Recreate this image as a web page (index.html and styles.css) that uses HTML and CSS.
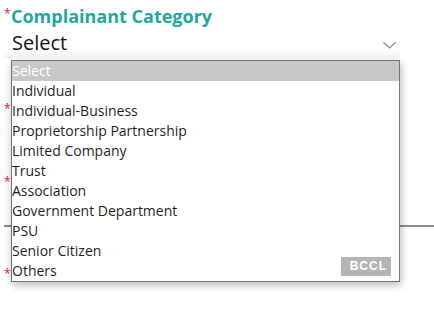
FILE: index.html
```html
<!DOCTYPE html>
<html lang="en">
<head>
    <meta charset="UTF-8">
    <meta name="viewport" content="width=device-width, initial-scale=1.0">
    <title>Complaint Form</title>
    <link rel="stylesheet" href="styles.css">
</head>
<body>
    <div class="form">
        <div class="field first">
            <label class="label"><span class="req">*</span>Complainant Category</label>
            <div class="select-box">
                <span class="select-value">Select</span>
                <svg class="chevron" width="13" height="7" viewBox="0 0 13 7">
                    <path d="M0.5 0.5 L6.5 6 L12.5 0.5" fill="none" stroke="#8a8a8a" stroke-width="1.2"/>
                </svg>
            </div>
        </div>

        <!-- fields below are covered by the open list -->
        <div class="field">
            <label class="label"><span class="req">*</span></label>
        </div>

        <div class="field tall">
            <label class="label"><span class="req">*</span></label>
            <div class="input-line"></div>
        </div>

        <div class="field last">
            <label class="label"><span class="req">*</span></label>
        </div>

        <ul class="dropdown">
            <li class="option active">Select</li>
            <li class="option">Individual</li>
            <li class="option">Individual-Business</li>
            <li class="option">Proprietorship Partnership</li>
            <li class="option">Limited Company</li>
            <li class="option">Trust</li>
            <li class="option">Association</li>
            <li class="option">Government Department</li>
            <li class="option">PSU</li>
            <li class="option">Senior Citizen</li>
            <li class="option">Others</li>
            <li class="watermark">BCCL</li>
        </ul>
    </div>
</body>
</html>
```

FILE: styles.css
```css
* {
    box-sizing: border-box;
    margin: 0;
    padding: 0;
}

body {
    font-family: 'Open Sans', 'Noto Sans', sans-serif;
    background: #ffffff;
    color: #1a1a1a;
}

.form {
    position: relative;
    padding: 4px 0 0 4px;
}

.field {
    display: flex;
    flex-direction: column;
    height: 73px;
}

.field.first {
    height: 95px;
}

.field.tall {
    height: 92px;
}

.field.last {
    height: 40px;
}

.label {
    display: flex;
    align-items: flex-start;
    height: 24px;
    font-size: 18px;
    font-weight: 700;
    line-height: 24px;
    color: #1fa89c;
}

.req {
    color: #e8202a;
    font-size: 12px;
    font-weight: 400;
    line-height: 14px;
    width: 7px;
    margin-top: 3px;
}

.select-box {
    display: flex;
    align-items: center;
    justify-content: space-between;
    width: 396px;
    height: 30px;
    padding: 0 4px 0 8px;
    background: linear-gradient(to bottom, #ffffff 70%, #f1f1f1 100%);
}

.select-value {
    font-size: 20px;
    color: #151515;
    line-height: 30px;
}

.chevron {
    margin-top: 4px;
}

.input-line {
    margin-top: 29px;
    border-bottom: 2px solid #8c8c8c;
}

.dropdown {
    position: absolute;
    left: 11px;
    top: 60px;
    width: 389px;
    list-style: none;
    background: #ffffff;
    border: 1px solid #777777;
    box-shadow: 1px 3px 8px rgba(0, 0, 0, 0.28);
}

.option {
    height: 20px;
    font-size: 14px;
    line-height: 20px;
    color: #1f1f1f;
    white-space: nowrap;
}

.option.active {
    background: #c8c8c8;
    color: #ffffff;
}

.watermark {
    position: absolute;
    right: 8px;
    bottom: 5px;
    width: 50px;
    height: 19px;
    padding-right: 4px;
    background: #b5b5b5;
    color: #ffffff;
    font-family: 'Liberation Sans', Arial, sans-serif;
    font-size: 12px;
    font-weight: 700;
    letter-spacing: 1px;
    line-height: 19px;
    text-align: right;
}
```
